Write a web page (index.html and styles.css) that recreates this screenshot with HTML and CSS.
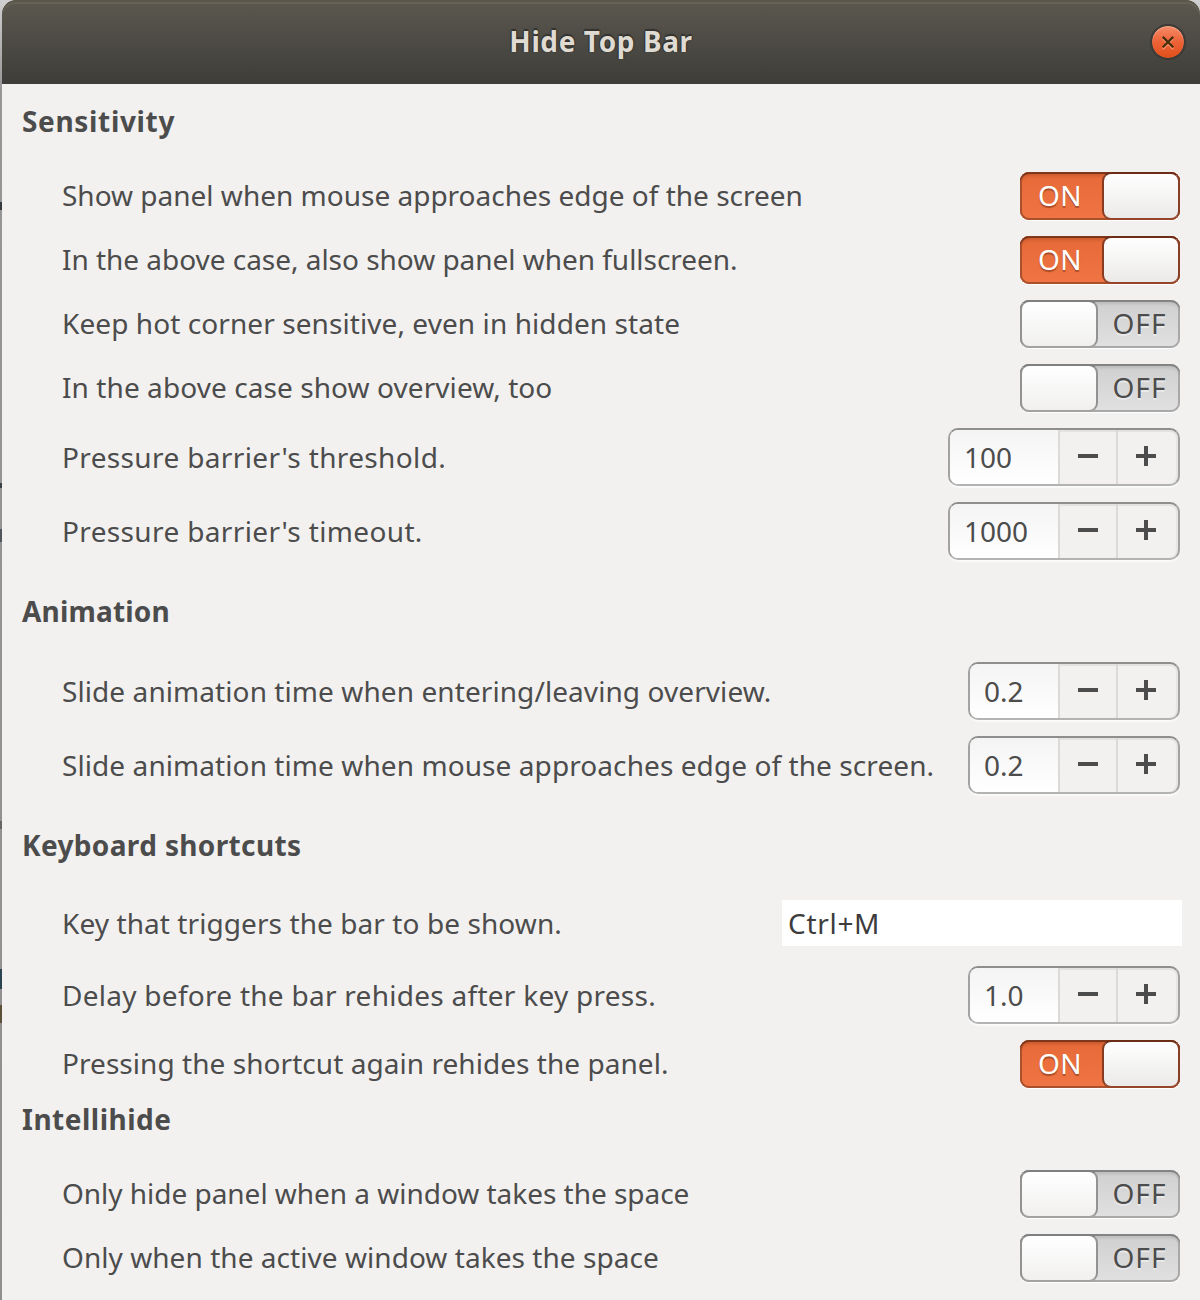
FILE: index.html
```html
<!DOCTYPE html>
<html lang="en">
<head>
<meta charset="utf-8">
<title>Hide Top Bar</title>
<link rel="stylesheet" href="styles.css">
</head>
<body>
<main class="window">
  <header class="titlebar">
    <h1 class="title">Hide Top Bar</h1>
    <button class="close" aria-label="Close"><svg width="32" height="32" viewBox="0 0 32 32"><path d="M10.8 12.9l10.4 10.4M21.2 12.9L10.8 23.3" stroke="#f58a63" stroke-width="2" fill="none"/><path d="M10.8 10.9l10.4 10.4M21.2 10.9L10.8 21.3" stroke="#46300f" stroke-width="2.2" fill="none"/></svg></button>
  </header>
  <section class="section">
    <h2 class="heading track-7">Sensitivity</h2>
    <div class="row toggle"><span class="label">Show panel when mouse approaches edge of the screen</span><span class="switch on"><span class="state">ON</span><span class="knob"></span></span></div>
    <div class="row toggle"><span class="label tight">In the above case, also show panel when fullscreen.</span><span class="switch on"><span class="state">ON</span><span class="knob"></span></span></div>
    <div class="row toggle"><span class="label track-1">Keep hot corner sensitive, even in hidden state</span><span class="switch off"><span class="knob"></span><span class="state">OFF</span></span></div>
    <div class="row toggle"><span class="label track-1">In the above case show overview, too</span><span class="switch off"><span class="knob"></span><span class="state">OFF</span></span></div>
    <div class="row"><span class="label track-4">Pressure barrier's threshold.</span><span class="spin wide"><span class="value">100</span><span class="step minus"></span><span class="step plus"></span></span></div>
    <div class="row"><span class="label track-4">Pressure barrier's timeout.</span><span class="spin wide"><span class="value">1000</span><span class="step minus"></span><span class="step plus"></span></span></div>
  </section>
  <section class="section">
    <h2 class="heading track-2">Animation</h2>
    <div class="row"><span class="label track-1">Slide animation time when entering/leaving overview.</span><span class="spin"><span class="value">0.2</span><span class="step minus"></span><span class="step plus"></span></span></div>
    <div class="row"><span class="label track-1">Slide animation time when mouse approaches edge of the screen.</span><span class="spin"><span class="value">0.2</span><span class="step minus"></span><span class="step plus"></span></span></div>
  </section>
  <section class="section compact">
    <h2 class="heading track-4">Keyboard shortcuts</h2>
    <div class="row shortcut"><span class="label track-1">Key that triggers the bar to be shown.</span><span class="accel">Ctrl+M</span></div>
    <div class="row"><span class="label track-3">Delay before the bar rehides after key press.</span><span class="spin"><span class="value">1.0</span><span class="step minus"></span><span class="step plus"></span></span></div>
    <div class="row toggle"><span class="label track-05">Pressing the shortcut again rehides the panel.</span><span class="switch on"><span class="state">ON</span><span class="knob"></span></span></div>
  </section>
  <section class="section">
    <h2 class="heading track-5">Intellihide</h2>
    <div class="row toggle"><span class="label tight">Only hide panel when a window takes the space</span><span class="switch off"><span class="knob"></span><span class="state">OFF</span></span></div>
    <div class="row toggle"><span class="label track-05">Only when the active window takes the space</span><span class="switch off"><span class="knob"></span><span class="state">OFF</span></span></div>
  </section>
</main>
</body>
</html>
```
FILE: styles.css
```css
* { box-sizing: border-box; }

html { height: 100%; overflow: hidden; }

/* Sliver of the desktop behind the window's left edge */
body {
  margin: 0;
  height: 1300px;
  padding-left: 2px;
  overflow: hidden;
  color: #4c4c4c;
  font: 28px/36px "Noto Sans", sans-serif;
  background:
    linear-gradient(#333a40, #333a40) 0 202px / 2px 8px no-repeat,
    linear-gradient(#3b4248, #3b4248) 0 483px / 2px 5px no-repeat,
    linear-gradient(#50565b, #50565b) 0 529px / 2px 13px no-repeat,
    linear-gradient(#666, #666) 0 821px / 2px 8px no-repeat,
    linear-gradient(#2c4350, #2c4350) 0 969px / 2px 20px no-repeat,
    linear-gradient(#5d5038, #5d5038) 0 1005px / 2px 18px no-repeat,
    linear-gradient(#d0d0d0, #969696 90px, #8f8f8f 1300px);
}

.window {
  height: 1300px;
  border-radius: 14px 14px 0 0;
  overflow: hidden;
  background: #f2f1f0;
}

.titlebar {
  display: grid;
  grid-template-columns: 34px 1fr 34px;
  align-items: center;
  height: 84px;
  padding: 0 15px;
  border-radius: 14px 14px 0 0;
  background: linear-gradient(#5b584f, #3e3d39);
  box-shadow: inset 0 2px #5a574a, inset 0 4px #656256;
}

.title {
  grid-column: 2;
  margin: 0;
  padding-bottom: 2px;
  text-align: center;
  font-size: 28px;
  font-weight: 700;
  letter-spacing: .6px;
  color: #dfdbd2;
  text-shadow: 0 -2px 1px #33322f, 1px 0 1px #33322f, -1px 0 1px #33322f;
}

.close {
  display: grid;
  place-items: center;
  width: 34px;
  height: 34px;
  padding: 0;
  border: 1px solid #3b3a36;
  border-radius: 50%;
  background: linear-gradient(#f68c6a, #ec6236 50%, #e1501c);
  background-clip: padding-box;
  box-shadow: 0 0 0 1px #3b3a36, inset 0 1px 1px #f9a88b;
}

.section {
  display: flex;
  flex-direction: column;
  gap: 16px;
  padding: 20px 20px 14px 20px;
}

.compact { padding-bottom: 0; }
.compact + .section { padding-top: 14px; }

.heading {
  margin: 0 0 16px;
  height: 36px;
  line-height: 34px;
  font-size: 28px;
  font-weight: 700;
}

.row {
  display: flex;
  justify-content: space-between;
  align-items: center;
  padding-left: 40px;
}

.shortcut { height: 54px; }
.label { white-space: nowrap; }
.toggle .label { padding-bottom: 2px; }

.tight { letter-spacing: -.03px; }
.track-05 { letter-spacing: .05px; }
.track-1 { letter-spacing: .08px; }
.track-2 { letter-spacing: .18px; }
.track-3 { letter-spacing: .27px; }
.track-4 { letter-spacing: .36px; }
.track-5 { letter-spacing: .5px; }
.track-7 { letter-spacing: .66px; }

.switch {
  display: flex;
  width: 160px;
  height: 48px;
  border-radius: 9px;
}

.state {
  flex: 1;
  height: 48px;
  line-height: 46px;
  text-align: center;
}

.knob {
  width: 78px;
  height: 48px;
  border: 2px solid;
  border-radius: 9px;
  background: linear-gradient(#fff, #ebeae8);
}

.on {
  background: linear-gradient(#e66a38, #f07544);
  box-shadow: inset 0 2px #7f371b, inset 0 0 0 2px #a9502d, inset 0 5px 3px -1px #c95a2e, 0 1px 1px #fff;
}
.on .state { padding-right: 2px; color: #fff; letter-spacing: .5px; text-shadow: 0 2px 1px #a84d29; }
.on .knob { border-color: #6d2d16 #893f25 #97452a #873b20; }

.off {
  background: linear-gradient(#cfcfcf, #e1e1e1);
  box-shadow: inset 0 2px #848484, inset 0 0 0 2px #a8a8a8, inset 0 5px 3px -1px #bcbcbc, 0 1px 1px #fff;
}
.off .state { padding-left: 1px; letter-spacing: 1.1px; text-shadow: 0 2px #e9e9e9; }
.off .knob { border-color: #7f7f7f #929292 #a2a2a2; background: linear-gradient(#fff, #f1f0ef); }

.spin {
  display: flex;
  width: 212px;
  height: 58px;
  border: 2px solid;
  border-color: #8e8e8d #a2a2a1 #b3b3b2;
  border-radius: 10px;
  background: #f2f1f0;
  box-shadow: 0 2px 1px #fafafa, inset 0 2px #e3e2e1, inset -2px 0 1px #e6e5e4;
}

.wide { width: 232px; }

.value {
  flex: 1;
  padding-left: 14px;
  line-height: 54px;
  border-radius: 8px 0 0 8px;
  background: linear-gradient(#f4f4f4, #fff);
}

.step {
  width: 58px;
  border-left: 2px solid #dbdad9;
  background: linear-gradient(#4c4c4c, #4c4c4c) 18px 24px / 20px 4px no-repeat;
}

.plus {
  width: 62px;
  background:
    linear-gradient(#4c4c4c, #4c4c4c) 18px 24px / 20px 4px no-repeat,
    linear-gradient(#4c4c4c, #4c4c4c) 26px 16px / 4px 20px no-repeat;
}

.accel {
  width: 400px;
  height: 46px;
  margin-right: -2px;
  padding-left: 6px;
  line-height: 46px;
  letter-spacing: .7px;
  color: #3c3c3c;
  background: #fff;
}
```
